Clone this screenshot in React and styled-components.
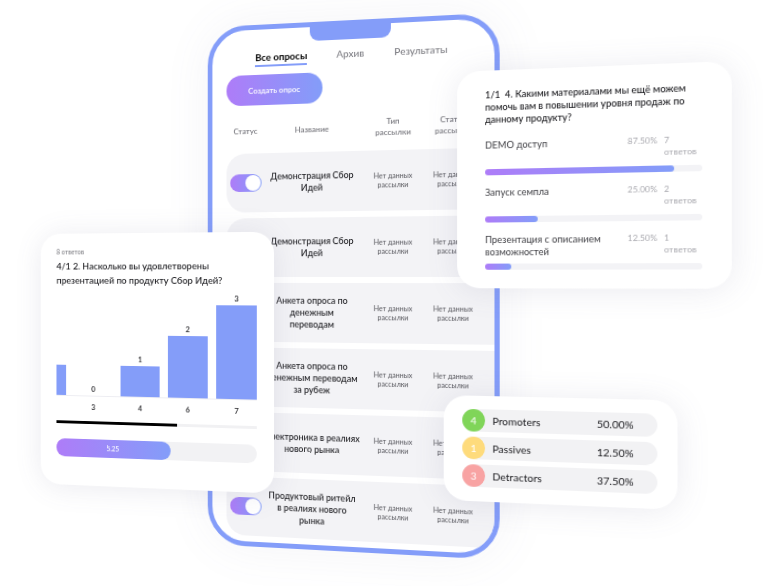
import React, { useState } from 'react';
import styled, { createGlobalStyle } from 'styled-components';

const BLUE = '#849df9';
const GRADIENT = 'linear-gradient(90deg, #ae7cf8 0%, #839df9 100%)';
const GREY = '#f3f3f6';

const GlobalStyle = createGlobalStyle`
  *, *::before, *::after { box-sizing: border-box; }
  body {
    margin: 0;
    background: #fff;
    color: #17171b;
    font-family: Lato, "Open Sans", sans-serif;
    overflow-x: hidden;
  }
  button, input { font: inherit; margin: 0; }
`;

const Scene = styled.main`
  display: flex;
  justify-content: center;
  min-height: 100vh;
  padding: 20px 56px 24px 0;
  overflow: hidden;
`;

const Plane = styled.div`
  position: relative;
  flex: none;
  width: 693px;
  padding-left: 185px;
  transform-origin: 336px 258px;
  transform: perspective(714px) rotateY(-8deg);
`;

const Phone = styled.section`
  width: 295px;
  padding-left: 15px;
  border: 5px solid ${BLUE};
  border-radius: 40px;
  background: #fff;
  overflow: hidden;
  box-shadow: 0 0 50px rgba(110, 110, 150, 0.08);
`;

const PhoneTop = styled.header`
  display: flex;
  flex-direction: column;
  align-items: center;
  padding-right: 15px;
`;

const Notch = styled.div`
  width: 82px;
  height: 14px;
  border-radius: 0 0 9px 9px;
  background: ${BLUE};
`;

const Tabs = styled.nav`
  display: flex;
  justify-content: center;
  gap: 30px;
  margin: 7px 0 8px;
`;

const Tab = styled.button`
  padding: 0;
  border: 0;
  border-bottom: 2px solid ${(p) => (p.$active ? BLUE : 'transparent')};
  background: none;
  color: ${(p) => (p.$active ? '#000' : '#7d7d83')};
  font-size: 10px;
  font-weight: ${(p) => (p.$active ? 700 : 500)};
  line-height: 15px;
  white-space: nowrap;
`;

const CreateButton = styled.button`
  display: block;
  width: 100px;
  height: 31px;
  padding: 0;
  border: 0;
  border-radius: 16px;
  background: ${GRADIENT};
  color: #fff;
  font-size: 8px;
  font-weight: 600;
`;

const Table = styled.table`
  width: 100%;
  margin-top: 7px;
  border-collapse: separate;
  border-spacing: 0 6px;
  table-layout: fixed;
  text-align: center;
`;

const Col = styled.col`
  width: ${(p) => p.$w};
`;

const HeadCell = styled.th`
  height: 30px;
  padding: 0 0 4px;
  color: #7d7d83;
  font-size: 8px;
  font-weight: 600;
  line-height: 11px;
  white-space: pre-line;
`;

const Cell = styled.td`
  height: 60px;
  padding: 0;
  background: ${GREY};
  color: ${(p) => (p.$name ? '#17171b' : '#55555b')};
  font-size: ${(p) => (p.$name ? '9px' : '7px')};
  font-weight: ${(p) => (p.$name ? 500 : 400)};
  line-height: ${(p) => (p.$name ? '12px' : '9px')};
  white-space: pre-line;
  &:first-child { border-radius: 20px 0 0 20px; }
`;

const Toggle = styled.input.attrs({ type: 'checkbox' })`
  appearance: none;
  display: flex;
  align-items: center;
  width: 33px;
  height: 18px;
  margin-left: 4px;
  padding: 1px;
  border-radius: 9px;
  background: #cfcfd6;
  &::after {
    content: '';
    width: 16px;
    height: 16px;
    border-radius: 50%;
    background: #fff;
  }
  &:checked {
    justify-content: flex-end;
    background: ${GRADIENT};
  }
`;

const Card = styled.section`
  position: absolute;
  border-radius: 22px;
  background: #fff;
  box-shadow: 0 2px 30px rgba(100, 100, 140, 0.13);
`;

const ScoreCard = styled(Card)`
  top: 211px;
  left: 0;
  width: 255px;
  padding: 14px 18px 30px;
`;

const Caption = styled.p`
  margin: 0 0 3px;
  color: #77777d;
  font-size: 7px;
  line-height: 10px;
`;

const Title = styled.h2`
  margin: 0;
  font-size: ${(p) => p.$size};
  font-weight: 500;
  line-height: ${(p) => p.$line};
  white-space: pre-wrap;
`;

const Chart = styled.div`
  display: flex;
  justify-content: flex-end;
  align-items: flex-end;
  gap: 9px;
  height: 115px;
  border-bottom: 1px solid #ededf2;
  overflow: hidden;
`;

const Column = styled.div`
  flex: none;
  width: 43px;
  text-align: center;
  font-size: 8px;
  font-weight: 600;
  line-height: 14px;
`;

const Bar = styled.div`
  height: ${(p) => p.$value * 32}px;
  background: ${BLUE};
`;

const Axis = styled.div`
  display: flex;
  justify-content: flex-end;
  gap: 9px;
  padding-top: 4px;
  overflow: hidden;
`;

const Line = styled.div`
  height: 3px;
  margin-top: 8px;
  background: #f1f1f3;
`;

const LineFill = styled.div`
  width: ${(p) => p.$percent}%;
  height: 100%;
  background: #000;
`;

const ScoreTrack = styled.div`
  height: 19px;
  margin-top: 16px;
  border-radius: 10px;
  background: #f2f2f4;
`;

const ScoreFill = styled.div`
  width: ${(p) => p.$percent}%;
  height: 100%;
  border-radius: 10px;
  background: ${GRADIENT};
  color: #fff;
  font-size: 7px;
  font-weight: 600;
  line-height: 19px;
  text-align: center;
`;

const AnswersCard = styled(Card)`
  top: 56px;
  left: 439px;
  width: 253px;
  padding: 18px 26px 18px 27px;
`;

const AnswerList = styled.ul`
  display: grid;
  gap: 11px;
  margin: 13px 0 0;
  padding: 0;
  list-style: none;
`;

const AnswerRow = styled.div`
  display: grid;
  grid-template-columns: 133px 33px 1fr;
  min-height: 24px;
  margin-bottom: 5px;
  color: #3c3c41;
  font-size: 9px;
  line-height: 12px;
  white-space: pre-line;
`;

const Muted = styled.span`
  color: #a9a9af;
  font-size: 8px;
  line-height: 11px;
`;

const Track = styled.div`
  height: 6px;
  border-radius: 3px;
  background: ${GREY};
`;

const TrackFill = styled.div`
  width: ${(p) => p.$percent}%;
  height: 100%;
  border-radius: 3px;
  background: ${GRADIENT};
`;

const NpsCard = styled(Card)`
  top: 373px;
  left: 426px;
  width: 218px;
  padding: 13px 18px 14px;
`;

const NpsList = styled.ul`
  display: grid;
  gap: 5px;
  margin: 0;
  padding: 0;
  list-style: none;
`;

const NpsRow = styled.li`
  display: grid;
  grid-template-columns: 22px 91px 1fr;
  column-gap: 7px;
  align-items: center;
  height: 22px;
  border-radius: 11px;
  background: #f2f2f4;
  font-size: 10px;
`;

const Count = styled.span`
  height: 22px;
  border-radius: 50%;
  background: ${(p) => p.$color};
  color: #fff;
  line-height: 22px;
  text-align: center;
`;

const TABS = ['Все опросы', 'Архив', 'Результаты'];
const NO_DATA = 'Нет данных\nрассылки';
const SURVEYS = [
  'Демонстрация Сбор\nИдей',
  'Демонстрация Сбор\nИдей',
  'Анкета опроса по\nденежным\nпереводам',
  'Анкета опроса по\nденежным переводам\nза рубеж',
  'Электроника в реалиях\nнового рынка',
  'Продуктовый ритейл\nв реалиях нового\nрынка',
];
const SCORES = [
  { label: '', value: 1 },
  { label: '3', value: 0 },
  { label: '4', value: 1 },
  { label: '6', value: 2 },
  { label: '7', value: 3 },
];
const ANSWERS = [
  { label: 'DEMO доступ', percent: 87.5, count: 7 },
  { label: 'Запуск семпла', percent: 25, count: 2 },
  { label: 'Презентация с описанием\nвозможностей', percent: 12.5, count: 1 },
];
const NPS = [
  { label: 'Promoters', percent: '50.00%', count: 4, color: '#80d559' },
  { label: 'Passives', percent: '12.50%', count: 1, color: '#fedb7c' },
  { label: 'Detractors', percent: '37.50%', count: 3, color: '#f8a3a3' },
];

function SurveyPhone() {
  const [tab, setTab] = useState(0);
  return (
    <Phone>
      <PhoneTop>
        <Notch />
        <Tabs>
          {TABS.map((name, i) => (
            <Tab key={name} type="button" $active={i === tab} onClick={() => setTab(i)}>
              {name}
            </Tab>
          ))}
        </Tabs>
      </PhoneTop>
      <CreateButton type="button">Создать опрос</CreateButton>
      <Table>
        <colgroup>
          <Col $w="40px" />
          <Col $w="98px" />
          <Col $w="66px" />
          <Col $w="52px" />
          <Col $w="auto" />
        </colgroup>
        <thead>
          <tr>
            <HeadCell>Статус</HeadCell>
            <HeadCell>Название</HeadCell>
            <HeadCell>{'Тип\nрассылки'}</HeadCell>
            <HeadCell>{'Статус\nрассылки'}</HeadCell>
            <HeadCell as="td" />
          </tr>
        </thead>
        <tbody>
          {SURVEYS.map((name, i) => (
            <tr key={i}>
              <Cell><Toggle defaultChecked aria-label={name} /></Cell>
              <Cell $name>{name}</Cell>
              <Cell>{NO_DATA}</Cell>
              <Cell>{NO_DATA}</Cell>
              <Cell />
            </tr>
          ))}
        </tbody>
      </Table>
    </Phone>
  );
}

export default function App() {
  return (
    <>
      <GlobalStyle />
      <Scene>
        <Plane>
          <SurveyPhone />
          <ScoreCard>
            <Caption>8 ответов</Caption>
            <Title $size="10px" $line="15px">
              {'4/1 2. Насколько вы удовлетворены\nпрезентацией по продукту Сбор Идей?'}
            </Title>
            <Chart>
              {SCORES.map((s) => (
                <Column key={s.label}>
                  {s.label && s.value}
                  <Bar $value={s.value} />
                </Column>
              ))}
            </Chart>
            <Axis>
              {SCORES.slice(1).map((s) => (
                <Column key={s.label}>{s.label}</Column>
              ))}
            </Axis>
            <Line><LineFill $percent={61} /></Line>
            <ScoreTrack><ScoreFill $percent={58}>5.25</ScoreFill></ScoreTrack>
          </ScoreCard>
          <AnswersCard>
            <Title $size="9px" $line="12px">
              {'1/1  4. Какими материалами мы ещё можем\nпомочь вам в повышении уровня продаж по\nданному продукту?'}
            </Title>
            <AnswerList>
              {ANSWERS.map((a) => (
                <li key={a.label}>
                  <AnswerRow>
                    <span>{a.label}</span>
                    <Muted>{a.percent.toFixed(2)}%</Muted>
                    <Muted>{a.count + '\nответов'}</Muted>
                  </AnswerRow>
                  <Track><TrackFill $percent={a.percent} /></Track>
                </li>
              ))}
            </AnswerList>
          </AnswersCard>
          <NpsCard>
            <NpsList>
              {NPS.map((n) => (
                <NpsRow key={n.label}>
                  <Count $color={n.color}>{n.count}</Count>
                  <span>{n.label}</span>
                  <span>{n.percent}</span>
                </NpsRow>
              ))}
            </NpsList>
          </NpsCard>
        </Plane>
      </Scene>
    </>
  );
}
